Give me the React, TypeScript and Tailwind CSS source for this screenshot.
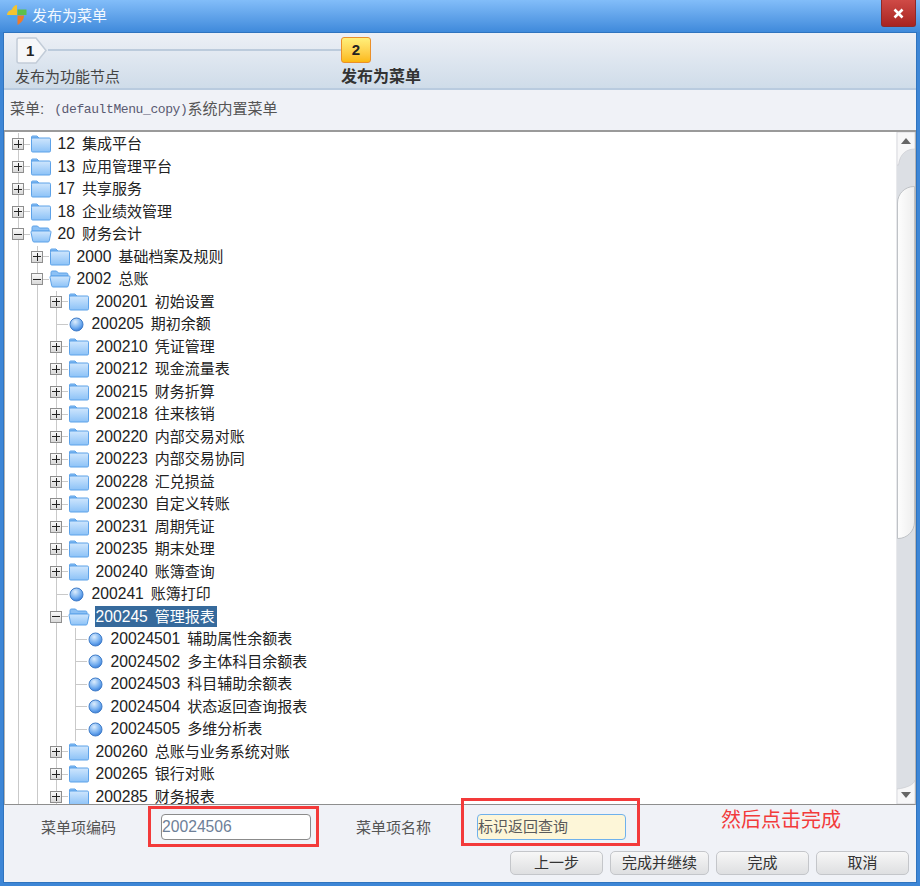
import React from "react";

const CJK = '"Liberation Sans","Noto Sans CJK SC",sans-serif';

type Row = { level: number; kind: "closed" | "open" | "leaf"; code: string; name: string; selected?: boolean };

const rows: Row[] = [
  { level: 0, kind: "closed", code: "12", name: "集成平台" },
  { level: 0, kind: "closed", code: "13", name: "应用管理平台" },
  { level: 0, kind: "closed", code: "17", name: "共享服务" },
  { level: 0, kind: "closed", code: "18", name: "企业绩效管理" },
  { level: 0, kind: "open", code: "20", name: "财务会计" },
  { level: 1, kind: "closed", code: "2000", name: "基础档案及规则" },
  { level: 1, kind: "open", code: "2002", name: "总账" },
  { level: 2, kind: "closed", code: "200201", name: "初始设置" },
  { level: 2, kind: "leaf", code: "200205", name: "期初余额" },
  { level: 2, kind: "closed", code: "200210", name: "凭证管理" },
  { level: 2, kind: "closed", code: "200212", name: "现金流量表" },
  { level: 2, kind: "closed", code: "200215", name: "财务折算" },
  { level: 2, kind: "closed", code: "200218", name: "往来核销" },
  { level: 2, kind: "closed", code: "200220", name: "内部交易对账" },
  { level: 2, kind: "closed", code: "200223", name: "内部交易协同" },
  { level: 2, kind: "closed", code: "200228", name: "汇兑损益" },
  { level: 2, kind: "closed", code: "200230", name: "自定义转账" },
  { level: 2, kind: "closed", code: "200231", name: "周期凭证" },
  { level: 2, kind: "closed", code: "200235", name: "期末处理" },
  { level: 2, kind: "closed", code: "200240", name: "账簿查询" },
  { level: 2, kind: "leaf", code: "200241", name: "账簿打印" },
  { level: 2, kind: "open", code: "200245", name: "管理报表", selected: true },
  { level: 3, kind: "leaf", code: "20024501", name: "辅助属性余额表" },
  { level: 3, kind: "leaf", code: "20024502", name: "多主体科目余额表" },
  { level: 3, kind: "leaf", code: "20024503", name: "科目辅助余额表" },
  { level: 3, kind: "leaf", code: "20024504", name: "状态返回查询报表" },
  { level: 3, kind: "leaf", code: "20024505", name: "多维分析表" },
  { level: 2, kind: "closed", code: "200260", name: "总账与业务系统对账" },
  { level: 2, kind: "closed", code: "200265", name: "银行对账" },
  { level: 2, kind: "closed", code: "200285", name: "财务报表" },
];

function Folder({ open }: { open: boolean }) {
  return (
    <svg width="22" height="18" viewBox="0 0 22 18" className="shrink-0">
      <defs>
        <linearGradient id="fg" x1="0" y1="0" x2="0" y2="1">
          <stop offset="0" stopColor="#cfe6fd" />
          <stop offset="1" stopColor="#8cc2f7" />
        </linearGradient>
      </defs>
      {open ? (
        <>
          <path d="M2 4V2.5C2 1.7 2.5 1 3.3 1H7.5L9.5 3H17.5C18.3 3 19 3.6 19 4.5V6H2Z" fill="#8dc1f5" stroke="#5da2e8" />
          <path d="M1 7.2C.9 6.4 1.4 6 2 6H20C20.7 6 21.2 6.4 21 7.2L19.3 15.8C19.2 16.5 18.7 17 18 17H4C3.3 17 2.8 16.5 2.7 15.8Z" fill="url(#fg)" stroke="#5da2e8" />
        </>
      ) : (
        <>
          <path d="M1.5 4V2C1.5 1.4 2 1 2.5 1H7L9 3H1.5Z" fill="#8dc1f5" stroke="#5da2e8" />
          <rect x="1.5" y="3" width="19" height="14" rx="1.2" fill="url(#fg)" stroke="#5da2e8" />
        </>
      )}
    </svg>
  );
}

function Leaf() {
  return (
    <svg width="15" height="15" viewBox="0 0 15 15" className="shrink-0">
      <defs>
        <radialGradient id="lg" cx="0.4" cy="0.3" r="0.8">
          <stop offset="0" stopColor="#dcedfd" />
          <stop offset="0.6" stopColor="#6fabef" />
          <stop offset="1" stopColor="#2a6fd0" />
        </radialGradient>
      </defs>
      <circle cx="7.5" cy="7.5" r="6.5" fill="url(#lg)" stroke="#3f7cc8" />
    </svg>
  );
}

function Expander({ open }: { open: boolean }) {
  return (
    <span className="relative z-10 flex h-[12px] w-[12px] items-center justify-center border border-[#8e8e8e] bg-gradient-to-b from-[#fafafa] to-[#d9d9d9]">
      <span className="absolute h-px w-[8px] bg-[#222]" />
      {!open && <span className="absolute h-[8px] w-px bg-[#222]" />}
    </span>
  );
}

function Guide() {
  return (
    <span className="flex h-full w-[19px] shrink-0 justify-center">
      <span className="h-full w-px bg-[#c9c9c9]" />
    </span>
  );
}

function TreeRow({ row }: { row: Row }) {
  return (
    <div className="flex h-[22.5px] shrink-0 items-center pl-[3.5px] text-[15px] whitespace-nowrap text-[#222]">
      {Array.from({ length: row.level }).map((_, i) => (
        <Guide key={i} />
      ))}
      <span className="relative flex h-full w-[19px] shrink-0 items-center justify-center">
        <span className="absolute left-[9px] h-full w-px bg-[#c9c9c9]" />
        <span className="absolute left-[9px] h-px w-[12px] bg-[#c9c9c9]" />
        {row.kind !== "leaf" && <Expander open={row.kind === "open"} />}
      </span>
      {row.kind === "leaf" ? (
        <span className="flex w-[25px] shrink-0 items-center pl-[3.5px]">
          <Leaf />
        </span>
      ) : (
        <span className="ml-[2px] flex w-[27px] shrink-0 items-center">
          <Folder open={row.kind === "open"} />
        </span>
      )}
      <span
        className={
          row.selected
            ? "flex h-[21px] items-center bg-[#366a9c] pr-[2px] pl-[1px] text-white"
            : "flex h-[21px] items-center pr-[2px] pl-[1px]"
        }
      >
        <span className="text-[15.7px]">{row.code}</span>
        <span className="ml-[7px]">{row.name}</span>
      </span>
    </div>
  );
}

function Scrollbar() {
  return (
    <div className="flex w-[19px] shrink-0 flex-col border-l border-[#e8e9ec] bg-[#dcdfe4]">
      <div className="relative flex h-[34px] shrink-0 justify-center">
        <svg width="18" height="34" viewBox="0 0 18 34" className="absolute top-0 left-0">
          <path d="M0 0H18V17C10 17 3 21 1.500 33H0Z" fill="#f7f7f8" stroke="#c6c8cc" strokeWidth="0.600" />
        </svg>
        <span className="relative mt-[6px] h-0 w-0 border-x-[5px] border-b-[6px] border-x-transparent border-b-[#666]" />
      </div>
      <div className="h-[20px] shrink-0" />
      <div className="h-[353px] shrink-0 rounded-tl-[17px] rounded-br-[17px] border border-[#bfc2c6] bg-gradient-to-r from-[#fdfdfd] to-[#eeeeee]" />
      <div className="flex-1" />
      <div className="relative flex h-[24px] shrink-0 items-end justify-center pb-[6px]">
        <svg width="18" height="24" viewBox="0 0 18 24" className="absolute top-0 left-0">
          <path d="M18 0C17 5 9 8 0 9V24H18Z" fill="#f7f7f8" stroke="#c6c8cc" strokeWidth="0.600" />
        </svg>
        <span className="relative h-0 w-0 border-x-[5px] border-t-[6px] border-x-transparent border-t-[#666]" />
      </div>
    </div>
  );
}

function Btn({ w, children }: { w: string; children: React.ReactNode }) {
  return (
    <button className={`${w} flex h-[24px] items-center justify-center rounded-[5px] border border-[#c4c6ca] bg-gradient-to-b from-[#f7f7f7] to-[#dedfe1] text-[15px] text-[#333]`}>
      {children}
    </button>
  );
}

export default function App() {
  return (
    <div
      className="flex h-[886px] w-[920px] flex-col overflow-hidden bg-[#3d86d6]"
      style={{ fontFamily: CJK }}
    >
      <div className="flex h-[32px] shrink-0 items-start bg-gradient-to-b from-[#82bdf9] to-[#3f8adb] pl-[7px]">
        <svg width="20" height="20" viewBox="0 0 20 20" className="mt-[5px] shrink-0">
          <path d="M10 0V10H0C0 7 3 5 5 4.500C5.500 2 8 0 10 0Z" fill="#f4c430" />
          <path d="M10.500 4.500H19.500V10H10.500Z" fill="#5cc04a" />
          <path d="M10.500 10.500H17C17 15 14 18 10.500 20Z" fill="#ef7a2a" />
          <path d="M0 10.500H10V15H5C3 15 1 13 0 10.500Z" fill="#4ea5ec" />
        </svg>
        <span className="mt-[7px] ml-[5px] text-[15px] leading-[18px] text-[#f2f8ff]">发布为菜单</span>
        <div className="mr-[4px] ml-auto flex h-[27px] w-[35px] items-center justify-center rounded-b-[3px] border border-t-0 border-[#8d2a2a] bg-gradient-to-b from-[#cf4a46] to-[#a82321]">
          <svg width="11" height="11" viewBox="0 0 11 11">
            <path d="M1.500 1.500L9.500 9.500M9.500 1.500L1.500 9.500" stroke="#fff" strokeWidth="2.600" />
          </svg>
        </div>
      </div>

      <div className="mx-[3px] mb-[3px] flex min-h-0 flex-1 flex-col border border-[#2f74bf] bg-[#f0f2f7]">
        <div className="flex h-[57px] shrink-0 border-b-2 border-[#b9cbdf] bg-gradient-to-b from-[#edf0f6] to-[#cfdce9] pt-[4px] pl-[11px]">
          <div className="flex w-[326px] shrink-0 flex-col">
            <div className="flex h-[26px] items-center pl-[1px]">
              <svg width="32" height="27" viewBox="0 0 32 27" className="shrink-0">
                <path d="M1 3C1 2 2 1 3 1H20L30 13.500L20 26H3C2 26 1 25 1 24Z" fill="#f6f7f9" stroke="#c2ccd8" strokeWidth="1.500" />
                <text x="10" y="19" fontSize="15" fontWeight="700" fill="#222" fontFamily="Liberation Sans">1</text>
              </svg>
              <span className="h-[2px] flex-1 bg-[#bccbdc]" />
            </div>
            <div className="mt-[4px] text-[15px] leading-[20px] text-[#444]">发布为功能节点</div>
          </div>
          <div className="flex flex-col">
            <div className="flex h-[26px] w-[30px] items-center justify-center rounded-[3px] border border-[#ea8f2a] bg-gradient-to-b from-[#fff07a] to-[#fbb90d] text-[15px] font-bold text-[#222]">
              2
            </div>
            <div className="mt-[4px] text-[16px] leading-[20px] font-bold text-[#333]">发布为菜单</div>
          </div>
        </div>

        <div className="flex h-[42px] shrink-0 items-center border-b-2 border-[#9a9a9a] pb-[1px] pl-[6px] text-[15px] text-[#555]">
          菜单:
          <span className="ml-[10px] font-['Liberation_Mono',monospace] text-[13px] tracking-[-0.4px] text-[#5a5a72]">(defaultMenu_copy)</span>
          系统内置菜单
        </div>

        <div className="flex h-[673px] shrink-0 border-x border-b border-x-[#b5b5b5] border-b-[#8e8e8e] bg-white">
          <div className="flex min-w-0 flex-1 flex-col overflow-hidden pt-[1px]">
            {rows.map((r) => (
              <TreeRow key={r.code} row={r} />
            ))}
          </div>
          <Scrollbar />
        </div>

        <div className="flex min-h-0 flex-1 flex-col text-[15px] text-[#555]">
          <div className="flex items-center pt-[9px]">
            <span className="mt-[3px] ml-[37px] w-[120px] shrink-0">菜单项编码</span>
            <div className="relative shrink-0">
              <div className="flex h-[26px] w-[150px] items-center rounded-[4px] border border-[#8b8b8b] bg-white text-[15.7px] text-[#6e8098]">
                20024506
              </div>
              <div className="pointer-events-none absolute -top-[8px] -right-[8px] -bottom-[7px] -left-[13px] border-[3px] border-[#f33a3a]" />
            </div>
            <span className="mt-[3px] ml-[45px] w-[121px] shrink-0">菜单项名称</span>
            <div className="relative shrink-0">
              <div className="flex h-[26px] w-[149px] items-center rounded-[4px] border border-[#6fb1ec] bg-[#fdf6d8] text-[#5a5a5a]">
                标识返回查询
              </div>
              <div className="pointer-events-none absolute -top-[16px] -right-[14px] -bottom-[6px] -left-[16px] border-[3px] border-[#f33a3a]" />
            </div>
            <span className="-mt-[14px] ml-[95px] text-[20px] leading-[26px] text-[#f23b3b]">然后点击完成</span>
          </div>
          <div className="mt-[11px] flex justify-end gap-[7px] pr-[7px]">
            <Btn w="w-[93px]">上一步</Btn>
            <Btn w="w-[99px]">完成并继续</Btn>
            <Btn w="w-[93px]">完成</Btn>
            <Btn w="w-[93px]">取消</Btn>
          </div>
        </div>
      </div>
    </div>
  );
}
